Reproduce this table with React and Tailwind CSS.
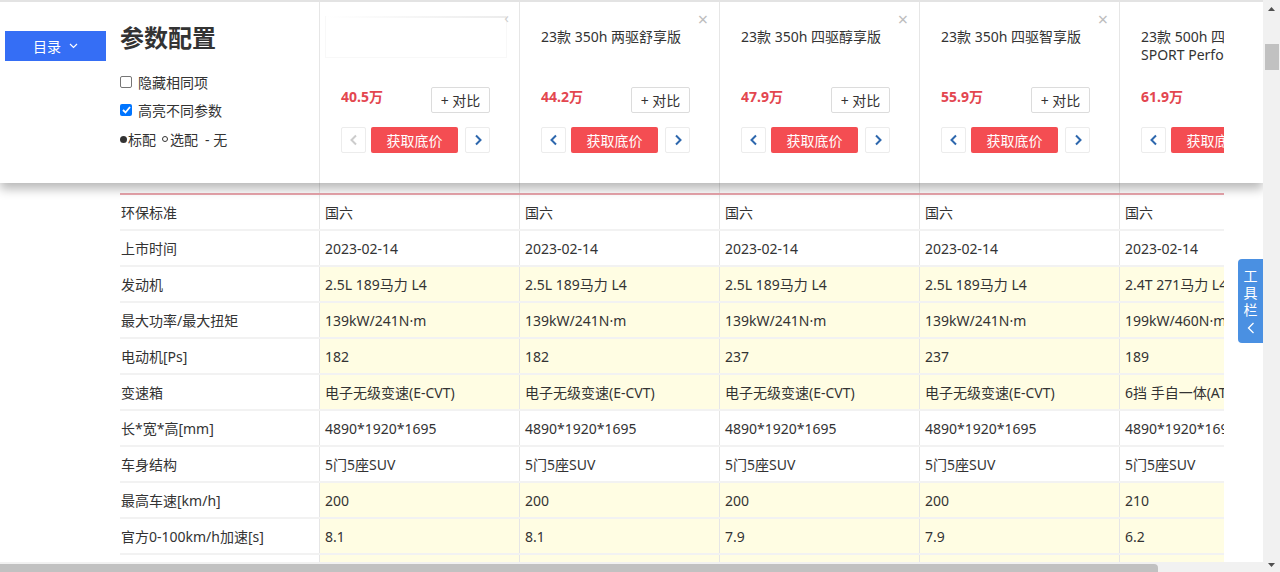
const cars = [
  { name: [], price: "40.5万", ghost: true, first: true },
  { name: ["23款 350h 两驱舒享版"], price: "44.2万" },
  { name: ["23款 350h 四驱醇享版"], price: "47.9万" },
  { name: ["23款 350h 四驱智享版"], price: "55.9万" },
  { name: ["23款 500h 四驱F", "SPORT Performance"], price: "61.9万" },
];

const rows = [
  { label: "环保标准", values: ["国六", "国六", "国六", "国六", "国六"] },
  { label: "上市时间", values: ["2023-02-14", "2023-02-14", "2023-02-14", "2023-02-14", "2023-02-14"] },
  { label: "发动机", hl: true, values: ["2.5L 189马力 L4", "2.5L 189马力 L4", "2.5L 189马力 L4", "2.5L 189马力 L4", "2.4T 271马力 L4"] },
  { label: "最大功率/最大扭矩", hl: true, values: ["139kW/241N·m", "139kW/241N·m", "139kW/241N·m", "139kW/241N·m", "199kW/460N·m"] },
  { label: "电动机[Ps]", hl: true, values: ["182", "182", "237", "237", "189"] },
  { label: "变速箱", hl: true, values: ["电子无级变速(E-CVT)", "电子无级变速(E-CVT)", "电子无级变速(E-CVT)", "电子无级变速(E-CVT)", "6挡 手自一体(AT)"] },
  { label: "长*宽*高[mm]", values: ["4890*1920*1695", "4890*1920*1695", "4890*1920*1695", "4890*1920*1695", "4890*1920*1695"] },
  { label: "车身结构", values: ["5门5座SUV", "5门5座SUV", "5门5座SUV", "5门5座SUV", "5门5座SUV"] },
  { label: "最高车速[km/h]", hl: true, values: ["200", "200", "200", "200", "210"] },
  { label: "官方0-100km/h加速[s]", hl: true, values: ["8.1", "8.1", "7.9", "7.9", "6.2"] },
  { label: "WLTC综合油耗[L/100km]", hl: true, values: ["5.6", "5.6", "5.9", "5.9", "8.0"] },
];

function Chevron({ dir, disabled }) {
  return (
    <svg width="10" height="12" viewBox="0 0 10 12" fill="none">
      <path
        d={dir === "left" ? "M7 1.5 L2.5 6 L7 10.5" : "M3 1.5 L7.5 6 L3 10.5"}
        stroke={disabled ? "#cccccc" : "#2d67ad"}
        strokeWidth="2"
      />
    </svg>
  );
}

function CarColumn({ car }) {
  return (
    <div className="relative w-[200px] shrink-0 border-l border-[#e6e6e6] pl-[21px] pt-[26px]">
      {car.ghost ? (
        <div className="absolute left-[5px] top-[14px] w-[182px] h-[42px] border border-[#f8f8f8] border-t-0">
          <div className="h-[2px] bg-gradient-to-r from-[#ffffff] to-[#ececec]" />
          <span className="absolute -right-[3px] -top-[8px] text-[15px] leading-[18px] text-[#cfcfcf]">‹</span>
        </div>
      ) : (
        <span className="absolute right-[11px] top-[8px] text-[18px] leading-[18px] text-[#bdbdbd]">×</span>
      )}
      <div className="h-[59px] text-[14px] leading-[18px] text-[#333] whitespace-nowrap">
        {car.name.map((l) => (
          <div key={l}>{l}</div>
        ))}
      </div>
      <div className="flex items-start justify-between w-[149px]">
        <span className="text-[14px] leading-[20px] font-bold text-[#e3464f]">{car.price}</span>
        <span className="w-[59px] h-[26px] border border-[#dcdcdc] rounded-[2px] flex items-center justify-center text-[14px] text-[#333]">
          + 对比
        </span>
      </div>
      <div className="flex items-center mt-[14px] w-[149px]">
        <span className="w-[25px] h-[26px] border border-[#ececec] rounded-[2px] flex items-center justify-center">
          <Chevron dir="left" disabled={car.first} />
        </span>
        <span className="ml-[5px] w-[87px] h-[26px] rounded-[2px] bg-[#f44d52] text-white text-[14px] flex items-center justify-center">
          获取底价
        </span>
        <span className="ml-[7px] w-[25px] h-[26px] border border-[#ececec] rounded-[2px] flex items-center justify-center">
          <Chevron dir="right" />
        </span>
      </div>
    </div>
  );
}

function Header() {
  return (
    <div className="absolute left-0 top-0 w-[1263px] h-[183px] bg-white border-t-2 border-[#e3e3e3] shadow-[0_6px_10px_rgba(0,0,0,0.28)] flex">
      <div className="w-[319px] shrink-0 flex">
        <div className="w-[120px] pl-[5px] pt-[29px]">
          <div className="w-[101px] h-[30px] bg-[#356ef5] text-white text-[14px] flex items-center justify-center gap-[8px]">
            <span>目录</span>
            <svg width="9" height="6" viewBox="0 0 9 6" fill="none">
              <path d="M1 1 L4.5 4.5 L8 1" stroke="white" strokeWidth="1.2" />
            </svg>
          </div>
        </div>
        <div className="pt-[19px] text-[#333]">
          <div className="text-[24px] leading-[34px] font-bold">参数配置</div>
          <div className="mt-[13px] flex items-center h-[28px] text-[14px]">
            <span className="w-[12px] h-[12px] border border-[#767676] rounded-[2px] bg-white mr-[6px]" />
            隐藏相同项
          </div>
          <div className="flex items-center h-[28px] text-[14px]">
            <span className="w-[12px] h-[12px] rounded-[2px] bg-[#0075ff] mr-[6px] flex items-center justify-center">
              <svg width="9" height="8" viewBox="0 0 9 8" fill="none">
                <path d="M1 4 L3.5 6.5 L8 1" stroke="white" strokeWidth="1.8" />
              </svg>
            </span>
            高亮不同参数
          </div>
          <div className="flex items-center h-[28px] mt-[1px] text-[14px]">
            <span className="w-[7px] h-[7px] rounded-full bg-[#333] mr-[1px]" />标配
            <span className="w-[6px] h-[6px] rounded-full border border-[#333] ml-[6px] mr-[2px]" />选配
            <span className="ml-[7px]">- 无</span>
          </div>
        </div>
      </div>
      <div className="w-[905px] shrink-0 overflow-hidden flex">
        {cars.map((c, i) => (
          <CarColumn key={i} car={c} />
        ))}
      </div>
    </div>
  );
}

function Table() {
  return (
    <div className="ml-[120px] w-[1104px] overflow-hidden text-[14px] text-[#333]">
      <div className="h-[159px]" />
      <div className="flex h-[36px] border-b-2 border-[#e9a5ac]">
        <div className="w-[199px] shrink-0 pl-[1px] pt-[6px] text-[#888]">基本信息</div>
        {cars.map((c, i) => (
          <div key={i} className="w-[200px] shrink-0 border-l border-[#e6e6e6] pl-[5px] pt-[6px] text-[#888]">
            参数
          </div>
        ))}
      </div>
      {rows.map((r) => (
        <div key={r.label} className="flex h-[36px] border-b-2 border-[#f2f2f2]">
          <div className="w-[199px] shrink-0 pl-[1px] flex items-center bg-white">{r.label}</div>
          {r.values.map((v, i) => (
            <div
              key={i}
              className={
                "w-[200px] shrink-0 border-l border-[#e6e6e6] pl-[5px] flex items-center whitespace-nowrap overflow-hidden " +
                (r.hl ? "bg-[#fffde3]" : "bg-white")
              }
            >
              {v}
            </div>
          ))}
        </div>
      ))}
    </div>
  );
}

export default function App() {
  return (
    <div className="w-[1280px] h-[572px] overflow-hidden flex bg-white font-['Noto_Sans','Noto_Sans_CJK_SC',sans-serif]">
      <div className="w-[1263px] shrink-0 flex flex-col">
        <div className="relative h-[562px] overflow-hidden">
          <Table />
          <Header />
          <div className="absolute left-[1238px] top-[259px] w-[25px] h-[84px] rounded-l-[4px] bg-[#4a90e2] text-white text-[14px] leading-[17px] flex flex-col items-center pt-[8px]">
            <span>工</span>
            <span>具</span>
            <span>栏</span>
            <svg className="mt-[4px]" width="8" height="12" viewBox="0 0 8 12" fill="none">
              <path d="M6.5 1 L1.5 6 L6.5 11" stroke="white" strokeWidth="1.3" />
            </svg>
          </div>
        </div>
        <div className="h-[10px] bg-[#f1f1f1] pt-[2px]">
          <div className="w-[1158px] h-[8px] bg-[#c1c1c1] rounded-tr-[4px]" />
        </div>
      </div>
      <div className="w-[17px] shrink-0 bg-[#f1f1f1] flex flex-col items-center">
        <svg className="mt-[7px]" width="7" height="4" viewBox="0 0 7 4">
          <path d="M0 4 L3.5 0 L7 4 Z" fill="#505050" />
        </svg>
        <div className="mt-[33px] w-[14px] h-[26px] bg-[#c1c1c1]" />
        <div className="flex-1" />
        <svg className="mb-[5px]" width="7" height="4" viewBox="0 0 7 4">
          <path d="M0 0 L3.5 4 L7 0 Z" fill="#505050" />
        </svg>
      </div>
    </div>
  );
}
